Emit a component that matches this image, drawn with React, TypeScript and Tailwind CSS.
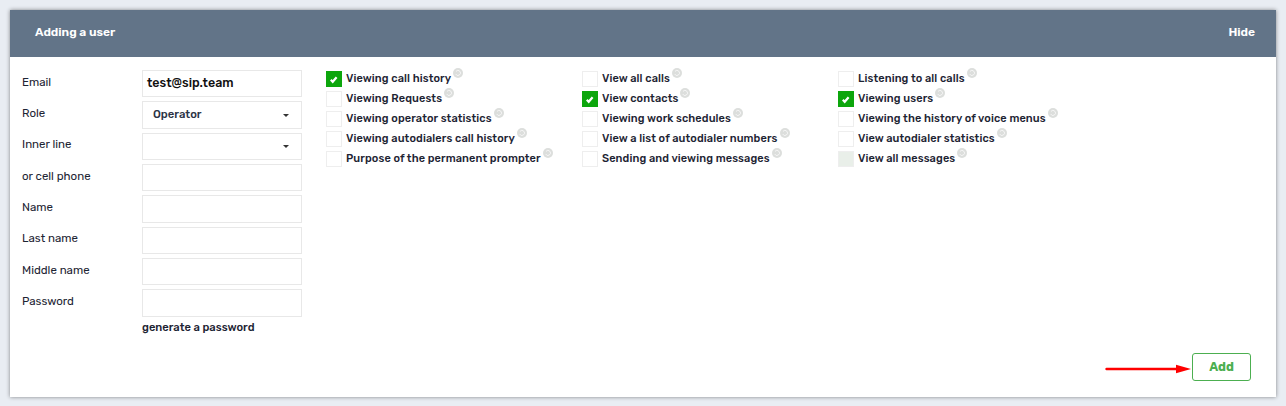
const fields = [
  { label: "Email", value: "test@sip.team" },
  { label: "Role", select: "Operator" },
  { label: "Inner line", select: "" },
  { label: "or cell phone" },
  { label: "Name" },
  { label: "Last name" },
  { label: "Middle name" },
  { label: "Password" },
];

const columns = [
  [
    { text: "Viewing call history", on: true },
    { text: "Viewing Requests" },
    { text: "Viewing operator statistics" },
    { text: "Viewing autodialers call history" },
    { text: "Purpose of the permanent prompter" },
  ],
  [
    { text: "View all calls" },
    { text: "View contacts", on: true },
    { text: "Viewing work schedules" },
    { text: "View a list of autodialer numbers" },
    { text: "Sending and viewing messages" },
  ],
  [
    { text: "Listening to all calls" },
    { text: "Viewing users", on: true },
    { text: "Viewing the history of voice menus" },
    { text: "View autodialer statistics" },
    { text: "View all messages", disabled: true },
  ],
];

function HelpIcon() {
  return (
    <svg viewBox="0 0 10 10" className="ml-[2px] h-[10px] w-[10px] -translate-y-[6px] shrink-0">
      <circle cx="5" cy="5" r="5" fill="#dcdedc" />
      <path d="M3 3.4a2.5 2.5 0 1 1-.3 2.6" fill="none" stroke="#f6f6f6" strokeWidth="1" />
    </svg>
  );
}

function Permission({ text, on, disabled }: { text: string; on?: boolean; disabled?: boolean }) {
  return (
    <div className="flex h-5 items-center">
      {on ? (
        <div className="flex h-4 w-4 items-center justify-center bg-[#0ca60c]">
          <svg viewBox="0 0 16 16" className="h-4 w-4">
            <path d="M4.8 8.8l1.9 2 3.9-4.6" fill="none" stroke="#fff" strokeWidth="2.2" />
          </svg>
        </div>
      ) : (
        <div className={`h-4 w-4 border border-[#eeeeee] ${disabled ? "bg-[#e9efe9]" : "bg-white"}`} />
      )}
      <span className="ml-1 whitespace-nowrap text-[11px] font-medium tracking-[0.1px] text-[#1d2433]">{text}</span>
      <HelpIcon />
    </div>
  );
}

export default function App() {
  return (
    <div className="h-[406px] w-[1286px] overflow-hidden bg-[#e9edf3] p-[10px] font-['Rubik','Inter','Roboto',sans-serif]">
      <div className="flex h-[387px] w-[1266px] flex-col bg-white shadow-[0_0_4px_rgba(0,0,0,0.45)]">
        <div className="flex h-[47px] shrink-0 items-center justify-between bg-[#627488] pb-[3px] pl-[25px] pr-[21px] text-[12px] font-semibold text-white">
          <span>Adding a user</span>
          <span>Hide</span>
        </div>

        <div className="flex min-h-0 flex-1 pl-3 pt-[13px]">
          <div className="w-[290px] shrink-0">
            {fields.map((f) => (
              <div key={f.label} className="mb-1 flex h-[27.35px] items-start">
                <span className="w-[120px] pt-[4.5px] text-[11.5px] leading-[14px] text-[#1d2433]">{f.label}</span>
                <div className="flex h-[27.35px] w-[160px] items-center justify-between border border-[#e8e8e8] bg-white pl-[10px] pr-3">
                  {f.select !== undefined ? (
                    <>
                      <span className="-translate-y-px text-[11.3px] font-medium text-[#2c3345]">{f.select}</span>
                      <span className="ml-auto h-0 w-0 border-x-[3px] border-t-[3px] border-x-transparent border-t-[#333]" />
                    </>
                  ) : (
                    <span className="-ml-[6px] text-[12.5px] font-medium text-[#111]">{f.value}</span>
                  )}
                </div>
              </div>
            ))}
            <div className="ml-[120px] mt-[2px] text-[11.2px] font-medium leading-[14px] text-[#1d2433]">generate a password</div>
          </div>

          <div className="-mt-[1px] ml-[14px] flex">
            {columns.map((col, i) => (
              <div key={i} className="w-[256px]">
                {col.map((p) => (
                  <Permission key={p.text} {...p} />
                ))}
              </div>
            ))}
          </div>
        </div>

        <div className="flex justify-end pb-[16px] pr-[25px]">
          <div className="flex items-center">
            <svg viewBox="0 0 88 10" className="mt-[4px] h-[10px] w-[88px]">
              <path d="M1.5 5h72" stroke="#ff0000" strokeWidth="2.4" strokeLinecap="round" />
              <path d="M71 .8l15 4.2-15 4.2z" fill="#ff0000" />
            </svg>
            <button className="ml-[-1px] h-[28px] w-[59px] rounded-[3px] border border-[#4caf50] bg-white text-[12.5px] font-bold text-[#4caf50]">
              Add
            </button>
          </div>
        </div>
      </div>
    </div>
  );
}
